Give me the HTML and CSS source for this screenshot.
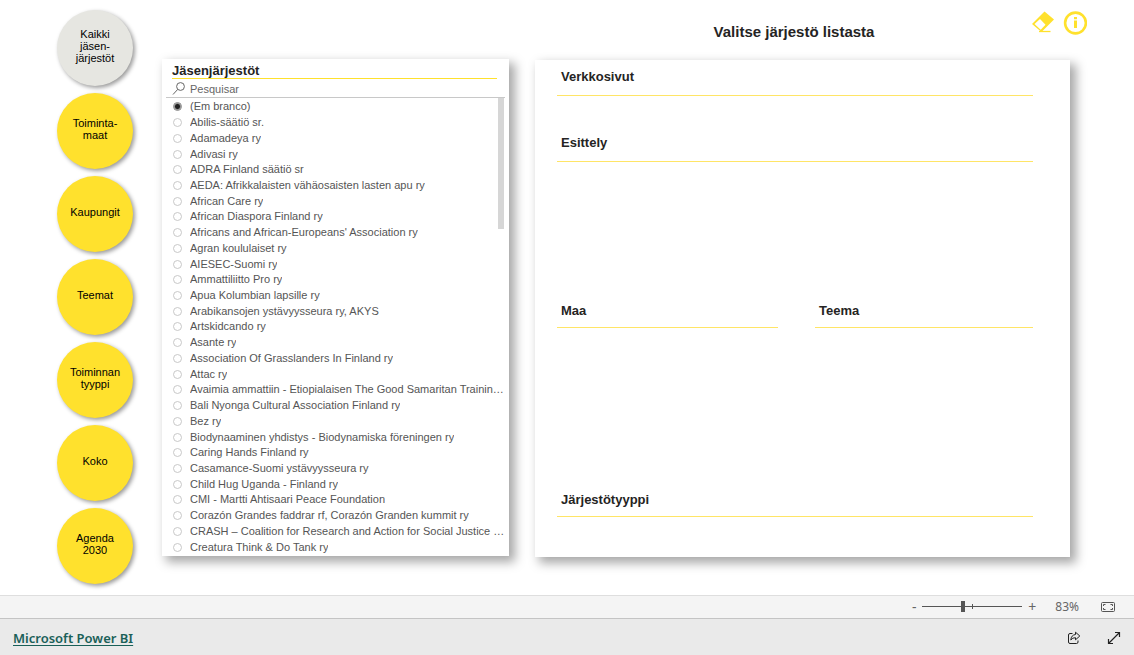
FILE: index.html
```html
<!DOCTYPE html>
<html lang="fi">
<head>
<meta charset="utf-8">
<title>Jäsenjärjestöt</title>
<link rel="stylesheet" href="styles.css">
</head>
<body>
<main class="report">
  <nav class="nav">
    <button class="bubble current">Kaikki<br>jäsen-<br>järjestöt</button>
    <button class="bubble">Toiminta-<br>maat</button>
    <button class="bubble">Kaupungit</button>
    <button class="bubble">Teemat</button>
    <button class="bubble">Toiminnan<br>tyyppi</button>
    <button class="bubble">Koko</button>
    <button class="bubble">Agenda<br>2030</button>
  </nav>
  <section class="slicer card">
    <h2 class="slicer-title">Jäsenjärjestöt</h2>
    <label class="search">
      <svg width="14" height="14" viewBox="0 0 14 14" fill="none" stroke="#666"><circle cx="8.500" cy="4.500" r="3.900"/><path d="M5.700 7.400 1 12.500"/></svg>
      <input type="text" placeholder="Pesquisar" aria-label="Pesquisar">
    </label>
    <div class="list-area">
      <div class="list">
        <label class="item"><input type="radio" name="org" checked><span>(Em branco)</span></label>
        <label class="item"><input type="radio" name="org"><span>Abilis-säätiö sr.</span></label>
        <label class="item"><input type="radio" name="org"><span>Adamadeya ry</span></label>
        <label class="item"><input type="radio" name="org"><span>Adivasi ry</span></label>
        <label class="item"><input type="radio" name="org"><span>ADRA Finland säätiö sr</span></label>
        <label class="item"><input type="radio" name="org"><span>AEDA: Afrikkalaisten vähäosaisten lasten apu ry</span></label>
        <label class="item"><input type="radio" name="org"><span>African Care ry</span></label>
        <label class="item"><input type="radio" name="org"><span>African Diaspora Finland ry</span></label>
        <label class="item"><input type="radio" name="org"><span>Africans and African-Europeans' Association ry</span></label>
        <label class="item"><input type="radio" name="org"><span>Agran koululaiset ry</span></label>
        <label class="item"><input type="radio" name="org"><span>AIESEC-Suomi ry</span></label>
        <label class="item"><input type="radio" name="org"><span>Ammattiliitto Pro ry</span></label>
        <label class="item"><input type="radio" name="org"><span>Apua Kolumbian lapsille ry</span></label>
        <label class="item"><input type="radio" name="org"><span>Arabikansojen ystävyysseura ry, AKYS</span></label>
        <label class="item"><input type="radio" name="org"><span>Artskidcando ry</span></label>
        <label class="item"><input type="radio" name="org"><span>Asante ry</span></label>
        <label class="item"><input type="radio" name="org"><span>Association Of Grasslanders In Finland ry</span></label>
        <label class="item"><input type="radio" name="org"><span>Attac ry</span></label>
        <label class="item"><input type="radio" name="org"><span>Avaimia ammattiin - Etiopialaisen The Good Samaritan Training Centerin tuki ry</span></label>
        <label class="item"><input type="radio" name="org"><span>Bali Nyonga Cultural Association Finland ry</span></label>
        <label class="item"><input type="radio" name="org"><span>Bez ry</span></label>
        <label class="item"><input type="radio" name="org"><span>Biodynaaminen yhdistys - Biodynamiska föreningen ry</span></label>
        <label class="item"><input type="radio" name="org"><span>Caring Hands Finland ry</span></label>
        <label class="item"><input type="radio" name="org"><span>Casamance-Suomi ystävyysseura ry</span></label>
        <label class="item"><input type="radio" name="org"><span>Child Hug Uganda - Finland ry</span></label>
        <label class="item"><input type="radio" name="org"><span>CMI - Martti Ahtisaari Peace Foundation</span></label>
        <label class="item"><input type="radio" name="org"><span>Corazón Grandes faddrar rf, Corazón Granden kummit ry</span></label>
        <label class="item"><input type="radio" name="org"><span>CRASH – Coalition for Research and Action for Social Justice and Human Dignity</span></label>
        <label class="item"><input type="radio" name="org"><span>Creatura Think &amp; Do Tank ry</span></label>
      </div>
      <div class="scrollbar"></div>
    </div>
  </section>
  <section class="details">
    <header class="head">
      <h1>Valitse järjestö listasta</h1>
      <button class="icon-btn" aria-label="Tyhjennä valinnat">
        <svg width="24" height="24" viewBox="0 0 24 24"><path d="M13.500.500 23 8.500 10.500 21 1 13Z" fill="#ffe12d"/><path d="M9 8 14.500 13.800 9.700 18.800 3.500 13Z" fill="#fff"/><path d="M8 20.500H19.500" stroke="#ffe12d" stroke-width="1.300"/></svg>
      </button>
      <button class="icon-btn" aria-label="Tietoa">
        <svg width="24" height="24" viewBox="0 0 24 24"><circle cx="12.500" cy="12" r="10.400" fill="none" stroke="#ffe12d" stroke-width="2.600"/><path d="M11 6h3v2.200h-3zM11 9.500h3V17h-3z" fill="#ffe12d"/></svg>
      </button>
    </header>
    <div class="card panel">
      <h3 class="field">Verkkosivut</h3>
      <h3 class="field intro">Esittely</h3>
      <div class="pair">
        <h3 class="field">Maa</h3>
        <h3 class="field">Teema</h3>
      </div>
      <h3 class="field type">Järjestötyyppi</h3>
    </div>
  </section>
</main>
<div class="zoombar">
  <button class="sign">-</button>
  <input class="slider" type="range" min="0" max="100" value="40" aria-label="Zoom">
  <button class="sign">+</button>
  <span class="percent">83%</span>
  <button class="icon-btn" aria-label="Sovita sivulle">
    <svg width="14" height="10" viewBox="0 0 14 10" fill="none" stroke="#555"><rect x=".5" y=".5" width="13" height="9" rx="1"/><path d="M2.500 4V2.500H4.500M9.500 2.500H11.500V4M11.500 6V7.500H9.500M4.500 7.500H2.500V6"/></svg>
  </button>
</div>
<footer class="footer">
  <a href="#">Microsoft Power BI</a>
  <button class="icon-btn" aria-label="Jaa">
    <svg width="14" height="14" viewBox="0 0 14 14" fill="none" stroke="#222"><path d="M5.500 2.500H3Q1.500 2.500 1.500 4V11Q1.500 12.500 3 12.500H9.500Q11 12.500 11 11V9.500"/><path d="M8.500 1.200 12.800 5 8.500 8.800V6.700Q5.500 6.500 3.800 9Q4.200 4 8.500 3.500Z"/></svg>
  </button>
  <button class="icon-btn" aria-label="Koko näyttö">
    <svg width="14" height="14" viewBox="0 0 14 14" fill="none" stroke="#222" stroke-width="1.200"><path d="M1.500 12.500 12.500 1.500M8 1.500H12.500V6M1.500 8V12.500H6"/></svg>
  </button>
</footer>
</body>
</html>
```
FILE: styles.css
```css
* { box-sizing: border-box; }
body {
  margin: 0;
  min-height: 100vh;
  display: flex;
  flex-direction: column;
  background: #fff;
  font-family: "Liberation Sans", Arial, sans-serif;
  color: #252423;
}
h1, h2, h3 { margin: 0; }
button { border: 0; padding: 0; background: none; font: inherit; color: inherit; cursor: pointer; }
svg { display: block; }
.report {
  flex: 1;
  display: grid;
  grid-template-columns: 105px minmax(0, 347fr) minmax(0, 552fr);
  align-items: start;
  padding: 0 47px 11px 57px;
}
.nav { display: flex; flex-direction: column; gap: 7px; padding-top: 10px; }
.bubble {
  width: 76px;
  height: 76px;
  padding-bottom: 4px;
  border-radius: 50%;
  background: #ffe12d;
  box-shadow: 2px 2px 4px rgba(0, 0, 0, .4);
  font-size: 11px;
  line-height: 12px;
  color: #000;
}
.bubble.current { background: #e6e6e1; }
.card { background: #fff; box-shadow: 5px 5px 10px 1px rgba(0, 0, 0, .35); }
.slicer { margin-top: 59px; padding: 4px 4px 1px; }
.slicer-title {
  margin: 0 8px 0 6px;
  font-size: 13px;
  line-height: 15px;
  border-bottom: 1px solid #ffe12d;
}
.search {
  display: flex;
  align-items: center;
  gap: 4px;
  height: 19px;
  padding: 2px 0 0 6px;
  border-bottom: 1px solid #c8c8c8;
}
.search input {
  flex: 1;
  min-width: 0;
  border: 0;
  padding: 0;
  outline: 0;
  background: none;
  font: 11px "Liberation Sans", Arial, sans-serif;
}
.search input::placeholder { color: #666; opacity: 1; }
.list-area { position: relative; padding-top: 1px; }
.list { display: grid; grid-template-columns: minmax(0, 1fr); grid-auto-rows: 1fr; height: 456px; }
.item {
  display: flex;
  align-items: center;
  gap: 8px;
  min-width: 0;
  min-height: 0;
  padding-left: 7px;
  font-size: 11px;
  line-height: 15px;
  color: #555;
}
.item span { overflow: hidden; text-overflow: ellipsis; white-space: nowrap; }
.item input {
  appearance: none;
  flex: none;
  width: 9px;
  height: 9px;
  margin: 0;
  border: 1px solid #c8c8c8;
  border-radius: 50%;
}
.item input:checked { border-color: #888; background: radial-gradient(circle, #222 0 2px, #fff 4px); }
.scrollbar { position: absolute; top: 0; right: 1px; width: 6px; height: 131px; background: #d6d6d6; }
.details { padding-left: 26px; }
.report { grid-template-columns: 105px minmax(0, 347fr) minmax(0, 578fr); }
.head { display: flex; align-items: flex-start; height: 60px; padding: 11px 0 0 22px; }
.head h1 { flex: 1; font-size: 15px; line-height: 18px; padding-top: 12px; text-align: center; }
.head .icon-btn + .icon-btn { margin-left: 8px; }
.panel { margin-right: 17px; padding: 7px 37px 40px 22px; }
.field {
  height: 29px;
  padding-left: 4px;
  font-size: 13px;
  line-height: 20px;
  border-bottom: 1px solid #ffe566;
}
.intro { margin-top: 37px; }
.pair { display: grid; grid-template-columns: 221fr 218fr; gap: 37px; margin-top: 139px; }
.pair .field { height: 27px; }
.type { height: 27px; margin-top: 162px; }
.zoombar {
  display: flex;
  align-items: center;
  justify-content: flex-end;
  height: 23px;
  padding: 0 19px 1px 0;
  border-top: 1px solid #dedede;
  background: #f4f4f4;
  font: 12px "Noto Sans", sans-serif;
  color: #666;
}
.sign { width: 8px; font-size: 14px; line-height: 20px; }
.slider {
  appearance: none;
  width: 100px;
  height: 12px;
  margin: 0 6px 0 4px;
  background:
    linear-gradient(#555, #555) 50px 50% / 1px 5px no-repeat,
    linear-gradient(#555, #555) 0 50% / 100% 1px no-repeat;
}
.slider::-webkit-slider-thumb { appearance: none; width: 4px; height: 11px; background: #555; }
.percent { margin: 0 22px 0 19px; }
.footer {
  display: flex;
  align-items: center;
  height: 37px;
  padding: 2px 13px 0;
  border-top: 1px solid #c4c4c4;
  background: #eaeaea;
}
.footer a {
  margin-right: auto;
  font: 600 13px "Noto Sans", sans-serif;
  color: #1a6058;
  text-underline-offset: 2px;
}
.footer .icon-btn + .icon-btn { margin-left: 26px; }
```
